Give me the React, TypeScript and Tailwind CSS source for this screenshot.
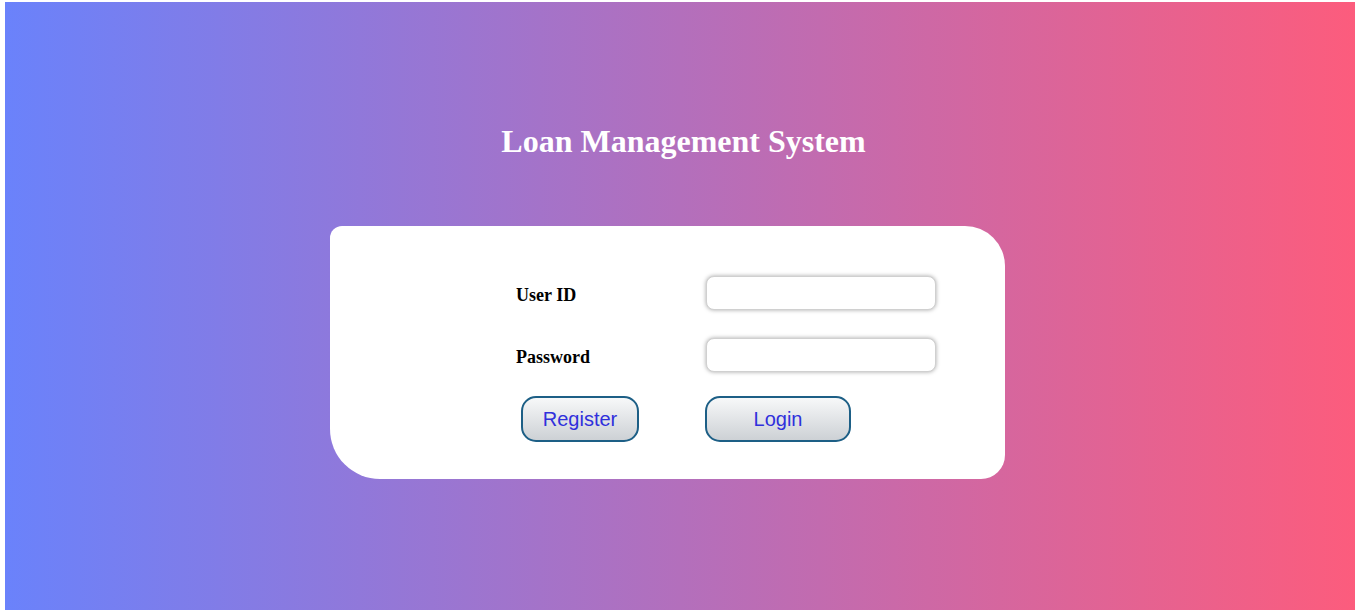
import React from "react";

export default function App() {
  return (
    <div className="w-[1359px] h-[614px] bg-white pt-[2px] pl-[5px]">
      <div className="w-[1350px] h-[608px] bg-[linear-gradient(to_right,#6a82fb,#fc5c7d)] flex flex-col items-center">
        <h1
          className="mt-[123px] ml-[7px] text-white font-bold text-[32px] leading-[32px]"
          style={{ fontFamily: '"Liberation Serif", "Times New Roman", serif' }}
        >
          Loan Management System
        </h1>
        <div className="mt-[69px] ml-[-25px] w-[675px] h-[253px] bg-white rounded-tl-[12px] rounded-tr-[40px] rounded-br-[24px] rounded-bl-[50px] pt-[50px] pl-[186px] flex flex-col">
          <div className="flex items-center h-[34px]">
            <label
              className="w-[190px] font-bold text-[18px] leading-[20px] text-black pt-[4px]"
              style={{ fontFamily: '"Liberation Serif", "Times New Roman", serif' }}
            >
              User ID
            </label>
            <input
              type="text"
              className="w-[230px] h-[34px] rounded-[8px] border border-[#d0d0d0] bg-white shadow-[0_0_4px_rgba(0,0,0,0.35)] outline-none"
            />
          </div>
          <div className="flex items-center h-[34px] mt-[28px]">
            <label
              className="w-[190px] font-bold text-[18px] leading-[20px] text-black pt-[4px]"
              style={{ fontFamily: '"Liberation Serif", "Times New Roman", serif' }}
            >
              Password
            </label>
            <input
              type="password"
              className="w-[230px] h-[34px] rounded-[8px] border border-[#d0d0d0] bg-white shadow-[0_0_4px_rgba(0,0,0,0.35)] outline-none"
            />
          </div>
          <div className="flex mt-[24px]">
            <button
              className="ml-[5px] w-[118px] h-[46px] rounded-[15px] border-2 border-[#1d5f86] bg-[linear-gradient(to_bottom,#f7f8f9,#cdd1d5)] text-[#3030dc] text-[20px]"
              style={{ fontFamily: '"Liberation Sans", Arial, sans-serif' }}
            >
              Register
            </button>
            <button
              className="ml-[66px] w-[146px] h-[46px] rounded-[15px] border-2 border-[#1d5f86] bg-[linear-gradient(to_bottom,#f7f8f9,#cdd1d5)] text-[#3030dc] text-[20px]"
              style={{ fontFamily: '"Liberation Sans", Arial, sans-serif' }}
            >
              Login
            </button>
          </div>
        </div>
      </div>
    </div>
  );
}
